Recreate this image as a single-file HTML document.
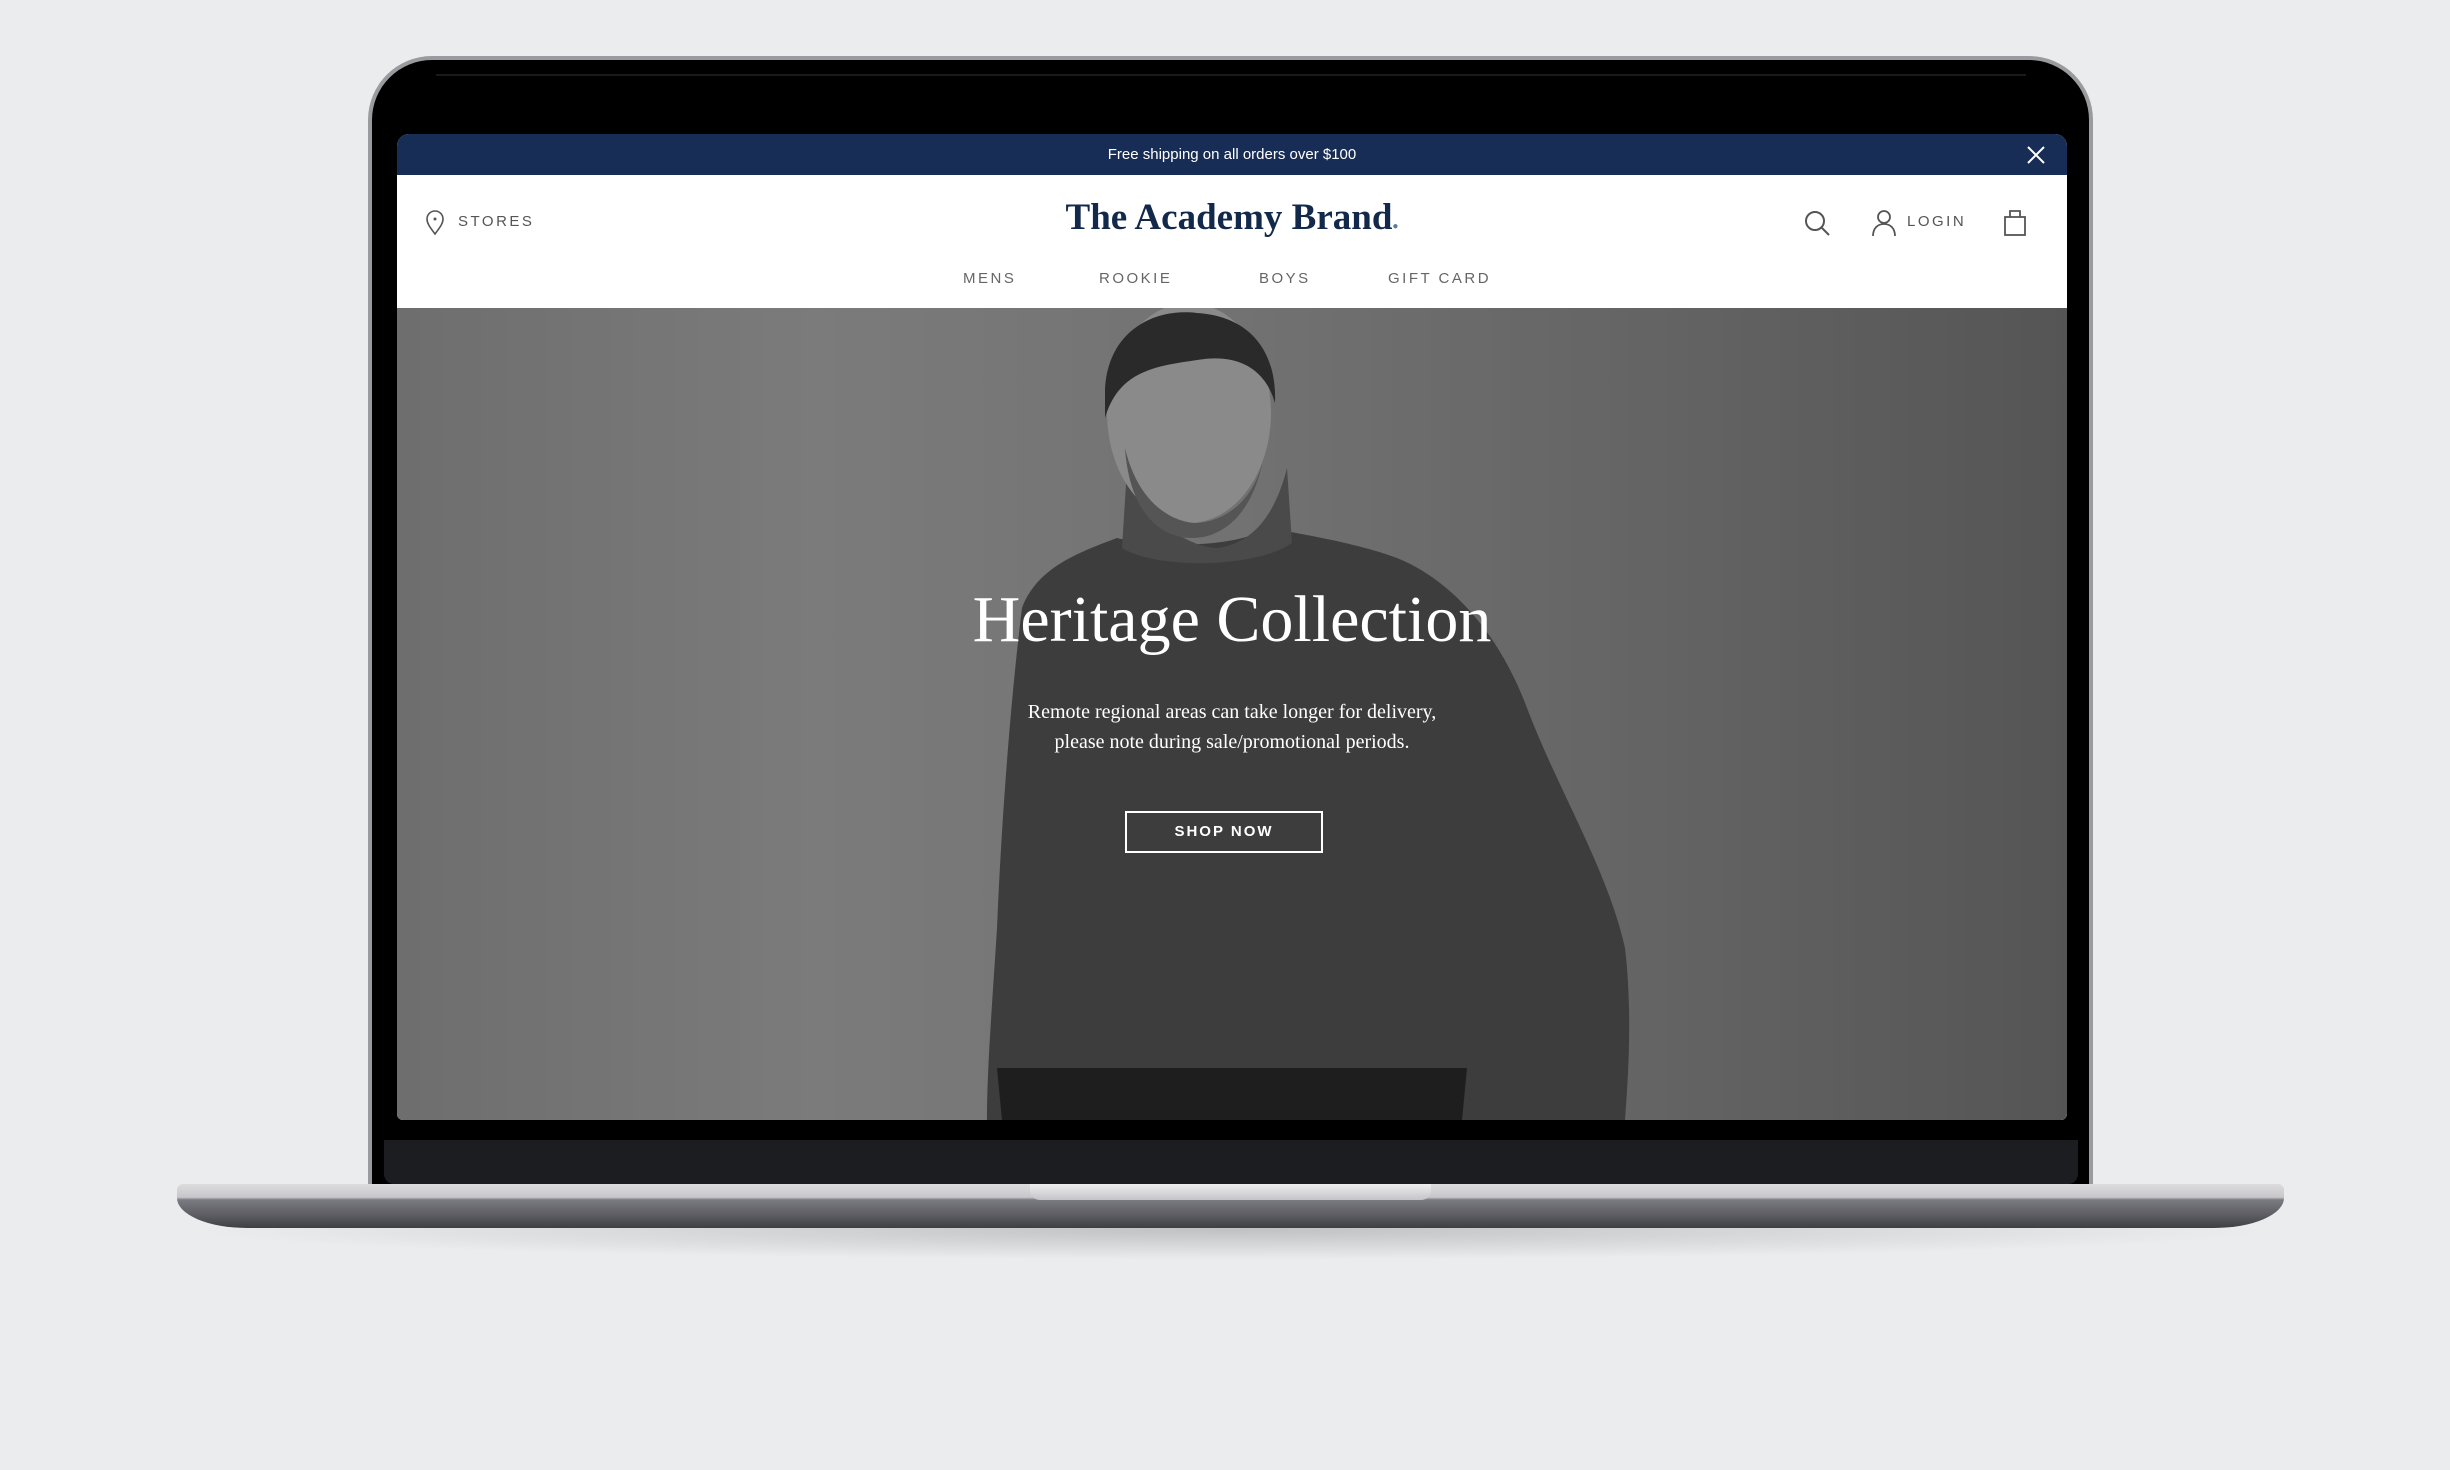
<!DOCTYPE html>
<html><head><meta charset="utf-8"><style>
*{margin:0;padding:0;box-sizing:border-box}
body{width:2450px;height:1470px;background:#ebecee;position:relative;overflow:hidden;font-family:"Liberation Sans",sans-serif}
.abs{position:absolute}
#lid{left:368px;top:56px;width:1725px;height:1132px;background:#000;border-radius:64px 64px 0 0;border:4px solid #9a9b9e;border-bottom:none}
#screen{left:397px;top:134px;width:1670px;height:986px;border-radius:12px 12px 6px 6px;overflow:hidden;background:#fff}
#banner{left:0;top:0;width:100%;height:41px;background:#172d55;color:#fff;font-size:15px;text-align:center;line-height:41px}
.nav{font-size:15px;letter-spacing:2.5px;color:#666;top:134px}
#hero{left:0;top:174px;width:100%;height:812px;background:linear-gradient(90deg,#6e6e6e 0%,#7b7b7b 25%,#727272 50%,#646464 75%,#555 100%)}
.tx{color:#fff;font-family:"Liberation Serif",serif;text-align:center;width:100%;left:0}
</style></head><body>
<div class="abs" style="left:180px;top:1200px;width:2100px;height:60px;background:radial-gradient(ellipse at center,rgba(0,0,0,.18),rgba(0,0,0,0) 70%)"></div>
<div id="lid" class="abs"></div>
<div class="abs" style="left:436px;top:74px;width:1590px;height:2px;background:#1a1a1a"></div>
<div class="abs" style="left:384px;top:1140px;width:1694px;height:44px;background:#1c1d20;border-radius:0 0 10px 10px"></div>
<div id="screen" class="abs">
 <div id="banner" class="abs">Free shipping on all orders over $100</div>
 <svg class="abs" style="left:1630px;top:12px" width="18" height="18"><path d="M1 1L17 17M17 1L1 17" stroke="#fff" stroke-width="2"/></svg>
 <svg class="abs" style="left:28px;top:76px" width="20" height="26" viewBox="0 0 20 26"><path d="M10 24C4 16 2 13 2 9a8 8 0 0 1 16 0c0 4-2 7-8 15z" fill="none" stroke="#555" stroke-width="1.6"/><circle cx="10" cy="9" r="1.5" fill="#555"/></svg>
 <div class="abs nav" style="left:61px;top:79px;color:#555">STORES</div>
 <div class="abs" style="left:0;width:100%;top:62px;text-align:center;font-family:'Liberation Serif',serif;font-weight:bold;font-size:37px;color:#13294b">The Academy Brand<span style="font-size:10px;color:#5a7aa5">●</span></div>
 <div class="abs nav" style="left:566px;top:136px">MENS</div>
 <div class="abs nav" style="left:702px;top:136px">ROOKIE</div>
 <div class="abs nav" style="left:862px;top:136px">BOYS</div>
 <div class="abs nav" style="left:991px;top:136px">GIFT CARD</div>
 <svg class="abs" style="left:1407px;top:76px" width="28" height="28"><circle cx="11" cy="11" r="9" fill="none" stroke="#555" stroke-width="2"/><path d="M17.5 17.5L25 25" stroke="#555" stroke-width="2"/></svg>
 <svg class="abs" style="left:1474px;top:75px" width="26" height="28"><circle cx="13" cy="8" r="6" fill="none" stroke="#555" stroke-width="1.8"/><path d="M2 27c0-8 5-12 11-12s11 4 11 12" fill="none" stroke="#555" stroke-width="1.8"/></svg>
 <div class="abs nav" style="left:1510px;top:79px;color:#555">LOGIN</div>
 <svg class="abs" style="left:1606px;top:74px" width="24" height="28"><rect x="2" y="9" width="20" height="18" fill="none" stroke="#555" stroke-width="1.8"/><path d="M7 9V3h10v6" fill="none" stroke="#555" stroke-width="1.8"/></svg>
 <div id="hero" class="abs">
  <svg class="abs" style="left:0;top:0" width="1670" height="812">
   <path d="M720 230 C680 245 640 260 625 300 C615 380 605 500 600 620 C595 700 590 760 590 812 L1228 812 C1232 760 1235 700 1228 640 C1210 560 1160 480 1130 400 C1100 320 1050 270 1000 250 C960 235 900 225 870 220 C840 240 760 240 720 230Z" fill="#3d3d3d"/>
   <path d="M730 160 C750 220 800 240 820 240 C860 235 880 200 890 160 L895 235 C860 260 760 262 725 240Z" fill="#4a4a4a"/>
   <ellipse cx="792" cy="105" rx="82" ry="110" fill="#8a8a8a"/>
   <path d="M708 80 C712 20 760 0 800 5 C850 8 880 40 878 95 C868 60 840 45 800 52 C760 58 722 62 708 110Z" fill="#2a2a2a"/>
   <path d="M728 140 C742 200 780 215 800 215 C830 213 862 190 868 140 C860 200 830 230 795 230 C760 230 732 200 728 140Z" fill="#555"/>
   <path d="M600 760 L1070 760 L1065 812 L605 812Z" fill="#1e1e1e"/>
  </svg>
  <div class="abs tx" style="top:274px;font-size:66px">Heritage Collection</div>
  <div class="abs tx" style="top:389px;font-size:20px;line-height:30px">Remote regional areas can take longer for delivery,<br>please note during sale/promotional periods.</div>
  <div class="abs" style="left:728px;top:503px;width:198px;height:42px;border:2px solid #fff;color:#fff;font-weight:bold;font-size:15px;letter-spacing:2px;text-align:center;line-height:38px">SHOP NOW</div>
 </div>
</div>
<div class="abs" style="left:177px;top:1184px;width:2107px;height:44px;border-radius:6px 6px 70px 70px/6px 6px 30px 30px;background:linear-gradient(180deg,#dcdcdf 0%,#c8c8cc 30%,#7a7b80 36%,#5d5e63 70%,#3e3f43 100%)"></div>
<div class="abs" style="left:1030px;top:1184px;width:401px;height:16px;background:linear-gradient(180deg,#eeeef0,#c4c4c8);border-radius:0 0 10px 10px"></div>
</body></html>
